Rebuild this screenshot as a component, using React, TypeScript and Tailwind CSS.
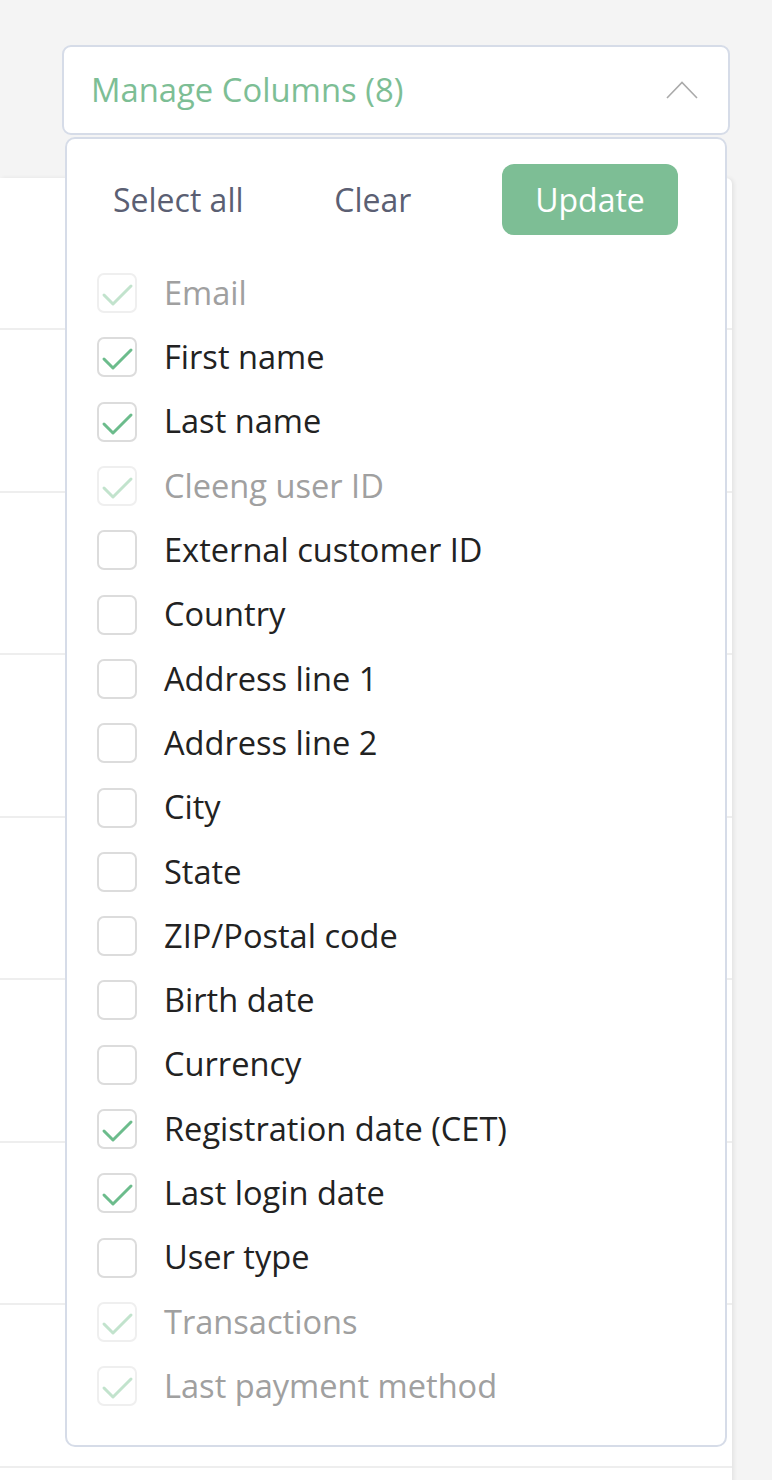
import React from 'react';

type Column = { label: string; checked: boolean; locked?: boolean };

const columns: Column[] = [
  { label: 'Email', checked: true, locked: true },
  { label: 'First name', checked: true },
  { label: 'Last name', checked: true },
  { label: 'Cleeng user ID', checked: true, locked: true },
  { label: 'External customer ID', checked: false },
  { label: 'Country', checked: false },
  { label: 'Address line 1', checked: false },
  { label: 'Address line 2', checked: false },
  { label: 'City', checked: false },
  { label: 'State', checked: false },
  { label: 'ZIP/Postal code', checked: false },
  { label: 'Birth date', checked: false },
  { label: 'Currency', checked: false },
  { label: 'Registration date (CET)', checked: true },
  { label: 'Last login date', checked: true },
  { label: 'User type', checked: false },
  { label: 'Transactions', checked: true, locked: true },
  { label: 'Last payment method', checked: true, locked: true },
];

function Checkbox({ checked, locked }: { checked: boolean; locked?: boolean }) {
  return (
    <span
      className={`flex h-[40px] w-[40px] shrink-0 items-center justify-center rounded-[7px] border-2 bg-white ${
        locked ? 'border-[#efefef]' : 'border-[#dcdcdc]'
      }`}
    >
      {checked && (
        <svg width="40" height="40" viewBox="0 0 40 40" className="-m-[2px]">
          <polyline
            points="7,22 16,31 34,13"
            fill="none"
            stroke={locked ? '#c2e3cd' : '#6cbc8c'}
            strokeWidth="3"
            strokeLinecap="round"
            strokeLinejoin="round"
          />
        </svg>
      )}
    </span>
  );
}

export default function App() {
  return (
    <div
      className="relative h-[1480px] w-[772px] overflow-hidden bg-[#f4f4f4]"
      style={{ fontFamily: '"Open Sans", "Noto Sans", sans-serif' }}
    >
      {/* header area */}
      <div className="h-[178px] pl-[62px] pt-[45px]">
        <button className="flex h-[90px] w-[668px] items-center justify-between rounded-[9px] border-2 border-[#d6dce8] bg-white pl-[27px] pr-[30px]">
          <span className="text-[32.8px] leading-none text-[#7dbe95]">Manage Columns (8)</span>
          <svg width="32" height="18" viewBox="0 0 32 18">
            <polyline points="1,17 16,1.5 31,17" fill="none" stroke="#aaaaaa" strokeWidth="1.6" />
          </svg>
        </button>
      </div>

      {/* table behind */}
      <div className="w-[732px] rounded-tr-[6px] bg-white shadow-[2px_0_4px_rgba(0,0,0,0.07)]">
        <div className="h-[152px] border-b-2 border-[#eeeeee]" />
        {[0, 1, 2, 3, 4, 5, 6, 7].map(i => (
          <div key={i} className="h-[162.5px] border-b-2 border-[#eeeeee]" />
        ))}
      </div>

      {/* dropdown panel */}
      <div className="absolute left-[65px] top-[137px] w-[662px] rounded-[10px] border-2 border-[#d6dce8] bg-white pb-[27px] pt-[25px]">
        <div className="flex items-center justify-between pl-[46px] pr-[47px]">
          <button className="text-[32px] leading-none text-[#5b5f73]">Select all</button>
          <button className="text-[32px] leading-none text-[#5b5f73]">Clear</button>
          <button className="flex h-[71px] w-[176px] items-center justify-center rounded-[12px] bg-[#7dbe95] text-[32px] leading-none text-white">
            Update
          </button>
        </div>
        <div className="mt-[26px] pl-[30px]">
          {columns.map(c => (
            <label key={c.label} className="flex h-[64.3px] items-center gap-[27px]">
              <Checkbox checked={c.checked} locked={c.locked} />
              <span
                className={`text-[32.6px] leading-none ${c.locked ? 'text-[#a0a0a0]' : 'text-[#222222]'}`}
              >
                {c.label}
              </span>
            </label>
          ))}
        </div>
      </div>
    </div>
  );
}
